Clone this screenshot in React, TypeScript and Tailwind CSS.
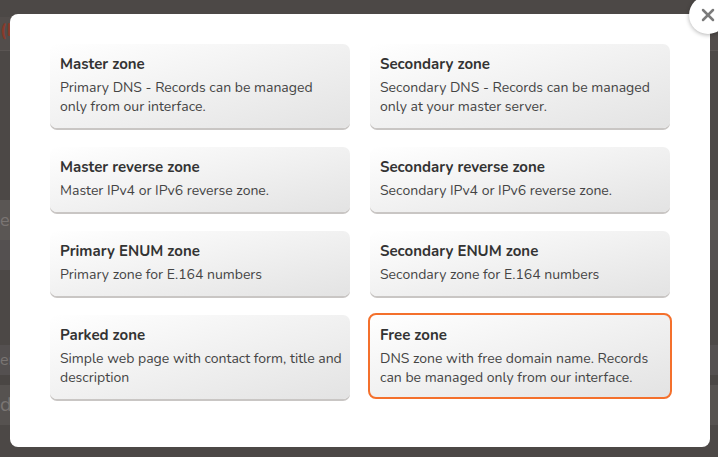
import { X } from "lucide-react";

type Zone = { title: string; desc: string; active?: boolean };

const zones: Zone[] = [
  { title: "Master zone", desc: "Primary DNS - Records can be managed\nonly from our interface." },
  { title: "Secondary zone", desc: "Secondary DNS - Records can be managed only at your master server." },
  { title: "Master reverse zone", desc: "Master IPv4 or IPv6 reverse zone." },
  { title: "Secondary reverse zone", desc: "Secondary IPv4 or IPv6 reverse zone." },
  { title: "Primary ENUM zone", desc: "Primary zone for E.164 numbers" },
  { title: "Secondary ENUM zone", desc: "Secondary zone for E.164 numbers" },
  { title: "Parked zone", desc: "Simple web page with contact form, title and description" },
  { title: "Free zone", desc: "DNS zone with free domain name. Records can be managed only from our interface.", active: true },
];

function ZoneCard({ zone }: { zone: Zone }) {
  return (
    <button
      className={
        zone.active
          ? "text-left rounded-[8px] bg-gradient-to-br from-white to-[#e3e3e3] border-2 border-[#f4702c] -mx-[2px] -mt-[2px] pl-[10px] pr-[4px] pt-[10px] pb-[10px]"
          : "text-left rounded-[7px] bg-gradient-to-br from-white to-[#e3e3e3] shadow-[0_2px_0_#c9c6c4] pl-[10px] pr-[4px] pt-[10px] pb-[12px]"
      }
    >
      <div className="text-[15px] leading-[20px] font-bold text-[#333]">{zone.title}</div>
      <div className="mt-[4px] text-[14px] leading-[19px] text-[#444] whitespace-pre-line">{zone.desc}</div>
    </button>
  );
}

export default function App() {
  return (
    <div className="relative w-[718px] h-[457px] overflow-hidden bg-[#4c4846] font-['Nunito','Lato','Open_Sans',sans-serif]">
      {/* dimmed page behind the dialog */}
      <div className="flex flex-col text-[#7a7573]">
        <div className="h-[17px]" />
        <div className="h-[34px] bg-[#524d4b] border-b border-[#5a5553] text-[#8a3a2a] font-bold text-[18px] leading-[26px]">(L</div>
        <div className="h-[149px]" />
        <div className="h-[40px] bg-[#5a5654] text-[18px] leading-[40px]">ec</div>
        <div className="h-[30px] bg-[#545050]" />
        <div className="h-[35px]" />
        <div className="h-[40px]" />
        <div className="h-[30px] bg-[#545050] text-[16px] leading-[30px]">er</div>
        <div className="h-[10px] bg-[#4a4644]" />
        <div className="h-[40px] bg-[#565250] text-[20px] leading-[40px]">d</div>
      </div>

      {/* dialog */}
      <div className="absolute left-[10px] top-[14px] w-[700px] h-[433px] bg-white rounded-[8px] px-[40px] pt-[30px]">
        <div className="grid grid-cols-2 gap-x-[20px] gap-y-[19px]">
          {zones.map((z) => (
            <ZoneCard key={z.title} zone={z} />
          ))}
        </div>
        <div className="absolute -right-[17px] -top-[18px] w-[38px] h-[38px] rounded-full bg-white shadow-[0_1px_4px_rgba(0,0,0,0.3)] flex items-center justify-center">
          <X size={20} strokeWidth={3} className="text-[#7b7b7b]" />
        </div>
      </div>
    </div>
  );
}
